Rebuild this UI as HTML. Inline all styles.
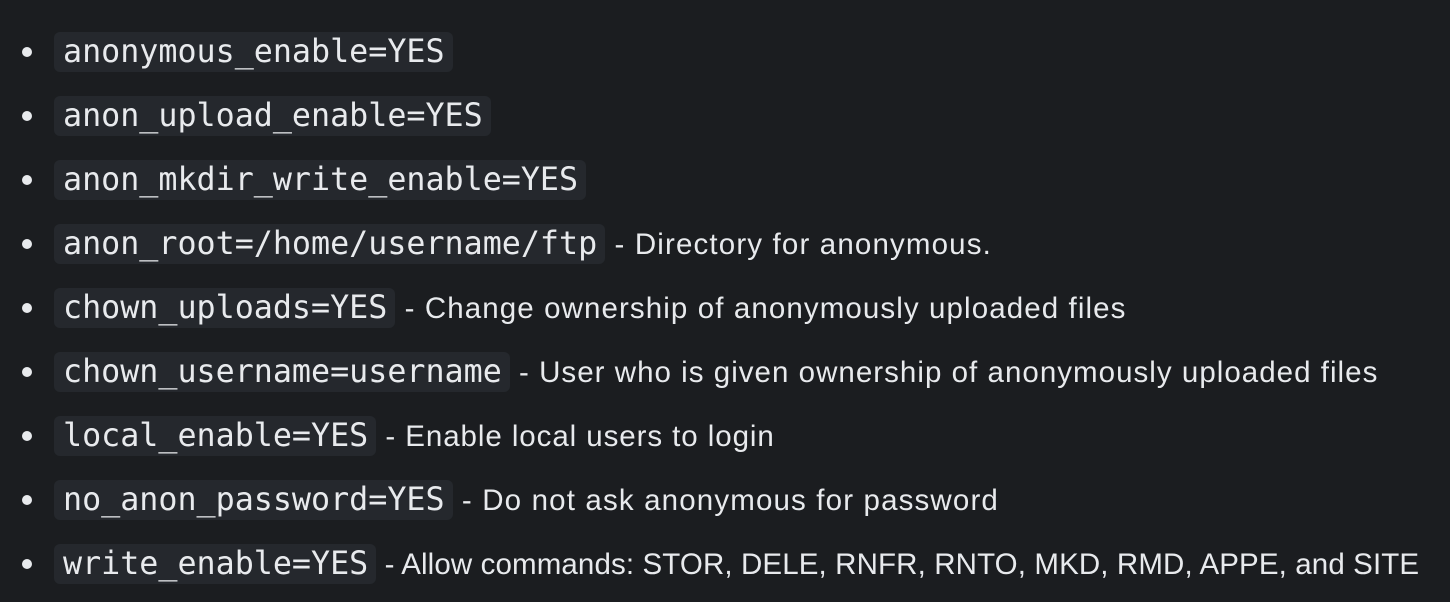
<!DOCTYPE html>
<html><head><meta charset="utf-8"><style>
html,body{margin:0;padding:0;background:#1b1d20;width:1450px;height:602px;overflow:hidden}
ul{list-style:none;margin:0;padding:20px 0 0 0}
li{position:relative;height:64px;line-height:66px;padding-left:54px;color:#e8eaed;font-family:"Liberation Sans",sans-serif;font-size:29.5px;white-space:nowrap}
li:before{content:"";position:absolute;left:22px;top:27px;width:10px;height:10px;border-radius:50%;background:#e8eaed}
code{display:inline-block;font-family:"DejaVu Sans Mono","Liberation Mono",monospace;font-size:31.7px;background:#25282d;border-radius:6px;padding:0 8px 0 9px;height:40px;line-height:40px;vertical-align:middle;position:relative;top:-2px;color:#e8eaed;letter-spacing:0}
</style></head><body>
<ul>
<li><code>anonymous_enable=YES</code></li>
<li><code>anon_upload_enable=YES</code></li>
<li><code>anon_mkdir_write_enable=YES</code></li>
<li style="letter-spacing:1.15px"><code>anon_root=/home/username/ftp</code> - Directory for anonymous.</li>
<li style="letter-spacing:1.1px"><code>chown_uploads=YES</code> - Change ownership of anonymously uploaded files</li>
<li style="letter-spacing:1.03px"><code>chown_username=username</code> - User who is given ownership of anonymously uploaded files</li>
<li style="letter-spacing:0.93px"><code>local_enable=YES</code> - Enable local users to login</li>
<li style="letter-spacing:1.15px"><code>no_anon_password=YES</code> - Do not ask anonymous for password</li>
<li style="letter-spacing:0.12px"><code>write_enable=YES</code> - Allow commands: STOR, DELE, RNFR, RNTO, MKD, RMD, APPE, and SITE</li>
</ul>
</body></html>
